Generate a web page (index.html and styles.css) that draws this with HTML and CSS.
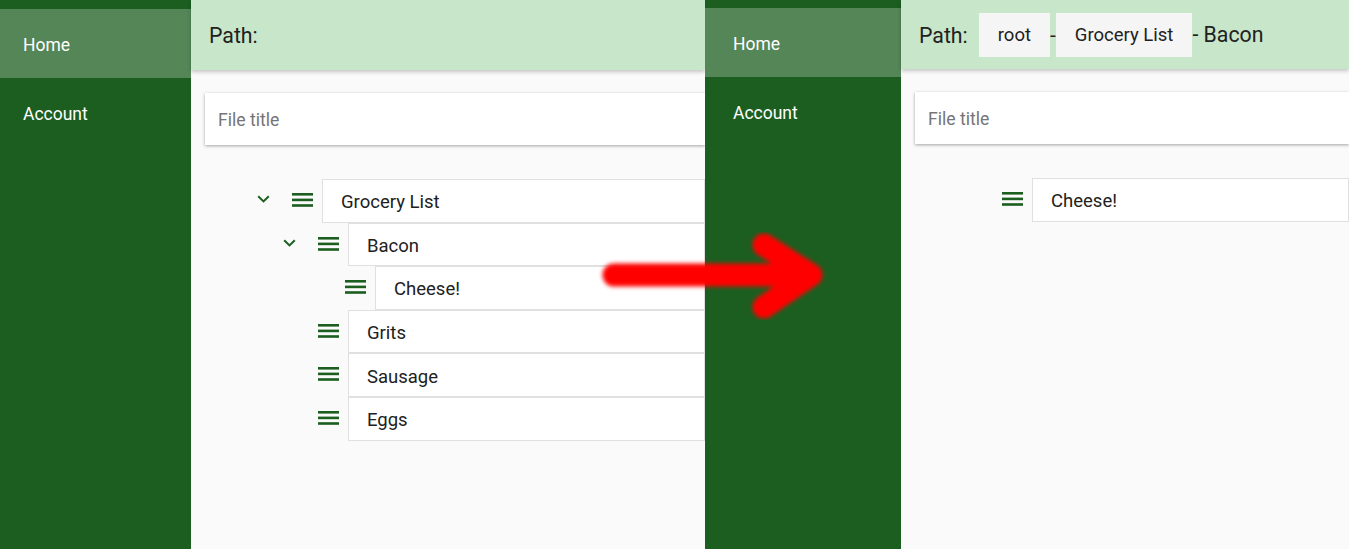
FILE: index.html
```html
<!DOCTYPE html>
<html lang="en">
<head>
<meta charset="utf-8">
<title>Tree editor before / after</title>
<link rel="stylesheet" href="styles.css">
</head>
<body>
<div class="stage">
  <section class="shot shot--left">
    <nav class="sidebar">
      <div class="nav-item nav-item--active">Home</div>
      <div class="nav-item">Account</div>
    </nav>
    <div class="main">
      <header class="header">
        <span class="path-label">Path:</span>
      </header>
      <div class="title-input">File title</div>
      <div class="tree">
        <div class="row lvl0">
          <svg class="toggle" viewBox="0 0 13 8" width="13" height="8"><polyline points="1.2,1.2 6.5,6.4 11.8,1.2"/></svg>
          <svg class="handle" viewBox="0 0 21 14" width="21" height="14"><rect x="0" y="0" width="21" height="2.6"/><rect x="0" y="5.6" width="21" height="2.6"/><rect x="0" y="11.2" width="21" height="2.6"/></svg>
          <div class="box">Grocery List</div>
        </div>
        <div class="row lvl1">
          <svg class="toggle" viewBox="0 0 13 8" width="13" height="8"><polyline points="1.2,1.2 6.5,6.4 11.8,1.2"/></svg>
          <svg class="handle" viewBox="0 0 21 14" width="21" height="14"><rect x="0" y="0" width="21" height="2.6"/><rect x="0" y="5.6" width="21" height="2.6"/><rect x="0" y="11.2" width="21" height="2.6"/></svg>
          <div class="box">Bacon</div>
        </div>
        <div class="row lvl2">
          <span class="toggle toggle--empty"></span>
          <svg class="handle" viewBox="0 0 21 14" width="21" height="14"><rect x="0" y="0" width="21" height="2.6"/><rect x="0" y="5.6" width="21" height="2.6"/><rect x="0" y="11.2" width="21" height="2.6"/></svg>
          <div class="box">Cheese!</div>
        </div>
        <div class="row lvl1">
          <span class="toggle toggle--empty"></span>
          <svg class="handle" viewBox="0 0 21 14" width="21" height="14"><rect x="0" y="0" width="21" height="2.6"/><rect x="0" y="5.6" width="21" height="2.6"/><rect x="0" y="11.2" width="21" height="2.6"/></svg>
          <div class="box">Grits</div>
        </div>
        <div class="row lvl1">
          <span class="toggle toggle--empty"></span>
          <svg class="handle" viewBox="0 0 21 14" width="21" height="14"><rect x="0" y="0" width="21" height="2.6"/><rect x="0" y="5.6" width="21" height="2.6"/><rect x="0" y="11.2" width="21" height="2.6"/></svg>
          <div class="box">Sausage</div>
        </div>
        <div class="row lvl1">
          <span class="toggle toggle--empty"></span>
          <svg class="handle" viewBox="0 0 21 14" width="21" height="14"><rect x="0" y="0" width="21" height="2.6"/><rect x="0" y="5.6" width="21" height="2.6"/><rect x="0" y="11.2" width="21" height="2.6"/></svg>
          <div class="box">Eggs</div>
        </div>
      </div>
    </div>
  </section>

  <section class="shot shot--right">
    <nav class="sidebar">
      <div class="nav-item nav-item--active">Home</div>
      <div class="nav-item">Account</div>
    </nav>
    <div class="main">
      <header class="header">
        <span class="path-label">Path:</span>
        <span class="chip chip--first">root</span>
        <span class="sep">-</span>
        <span class="chip">Grocery List</span>
        <span class="crumb">- Bacon</span>
      </header>
      <div class="title-input">File title</div>
      <div class="tree">
        <div class="row lvl0">
          <span class="toggle toggle--empty"></span>
          <svg class="handle" viewBox="0 0 21 14" width="21" height="14"><rect x="0" y="0" width="21" height="2.6"/><rect x="0" y="5.6" width="21" height="2.6"/><rect x="0" y="11.2" width="21" height="2.6"/></svg>
          <div class="box">Cheese!</div>
        </div>
      </div>
    </div>
  </section>

  <svg class="arrow" viewBox="0 0 250 110" width="250" height="110">
    <defs>
      <filter id="soft" x="-10%" y="-20%" width="120%" height="140%">
        <feGaussianBlur stdDeviation="2"/>
      </filter>
    </defs>
    <g filter="url(#soft)" fill="none" stroke="#ff0000" stroke-width="23" stroke-linecap="round" stroke-linejoin="round">
      <path d="M 24 50 L 218 50"/>
      <path d="M 174 20 L 221 50 L 174 82"/>
    </g>
  </svg>
</div>
</body>
</html>
```

FILE: styles.css
```css
* { box-sizing: border-box; }

html, body {
  margin: 0;
  padding: 0;
  width: 1349px;
  height: 549px;
  overflow: hidden;
  background: #fafafa;
  font-family: Roboto, "Noto Sans", "Liberation Sans", sans-serif;
  color: #212121;
}

.stage {
  position: relative;
  display: flex;
  width: 1349px;
  height: 549px;
}

.shot {
  display: flex;
  height: 549px;
  overflow: hidden;
  background: #fafafa;
}

.shot--left { width: 705px; }
.shot--right { flex: 1; }

/* Sidebar */
.sidebar {
  flex: none;
  width: 191px;
  background: #1b5e20;
  padding-top: 9px;
}

.shot--right .sidebar {
  width: 196px;
  padding-top: 8px;
}

.nav-item {
  height: 69px;
  line-height: 69px;
  padding: 2px 0 0 23px;
  font-size: 17.5px;
  color: #ffffff;
}

.shot--right .nav-item { padding-left: 28px; }

.nav-item--active { background: rgba(255, 255, 255, 0.25); }

/* Main column */
.main {
  flex: 1;
  min-width: 0;
  display: flex;
  flex-direction: column;
}

.header {
  position: relative;
  z-index: 1;
  flex: none;
  height: 70px;
  display: flex;
  align-items: center;
  padding-left: 18px;
  background: #c8e6c9;
  box-shadow: 0 2px 4px rgba(0, 0, 0, 0.22);
  font-size: 21.3px;
  white-space: nowrap;
}

.shot--right .header { height: 69px; }

.path-label {
  color: #212121;
  padding-top: 1px;
}

.chip {
  display: flex;
  align-items: center;
  height: 44px;
  padding: 1px 19px 0;
  background: #f5f5f5;
  font-size: 18.5px;
  color: #212121;
}

.chip--first { margin-left: 11px; }

.sep { font-size: 21px; }

.crumb { font-size: 21.3px; }

.title-input {
  flex: none;
  height: 52px;
  margin: 23px 0 0 14px;
  padding: 2px 0 0 13px;
  display: flex;
  align-items: center;
  background: #ffffff;
  box-shadow: 0 1px 3px rgba(0, 0, 0, 0.35);
  font-size: 17.6px;
  color: #757575;
}

/* Tree */
.tree {
  margin-top: 34px;
  display: flex;
  flex-direction: column;
}

.row {
  display: flex;
  align-items: flex-start;
  height: 43.6px;
  padding-left: 66px;
}

.row.lvl1 { padding-left: 92px; }
.row.lvl2 { padding-left: 119px; }

.toggle {
  flex: none;
  width: 13px;
  height: 8px;
  margin-top: 16px;
  margin-right: 22px;
  fill: none;
  stroke: #1b5e20;
  stroke-width: 2;
}

.toggle--empty { display: block; }

.handle {
  flex: none;
  margin-top: 14px;
  margin-right: 9px;
  fill: #1b5e20;
}

.box {
  flex: 1;
  height: 43.6px;
  display: flex;
  align-items: center;
  padding: 3px 0 0 18px;
  background: #ffffff;
  border: 1px solid #e0e0e0;
  font-size: 18.5px;
  color: #212121;
  white-space: nowrap;
}

/* Red arrow overlay */
.arrow {
  position: absolute;
  left: 590px;
  top: 225px;
  z-index: 5;
  overflow: visible;
}
```
